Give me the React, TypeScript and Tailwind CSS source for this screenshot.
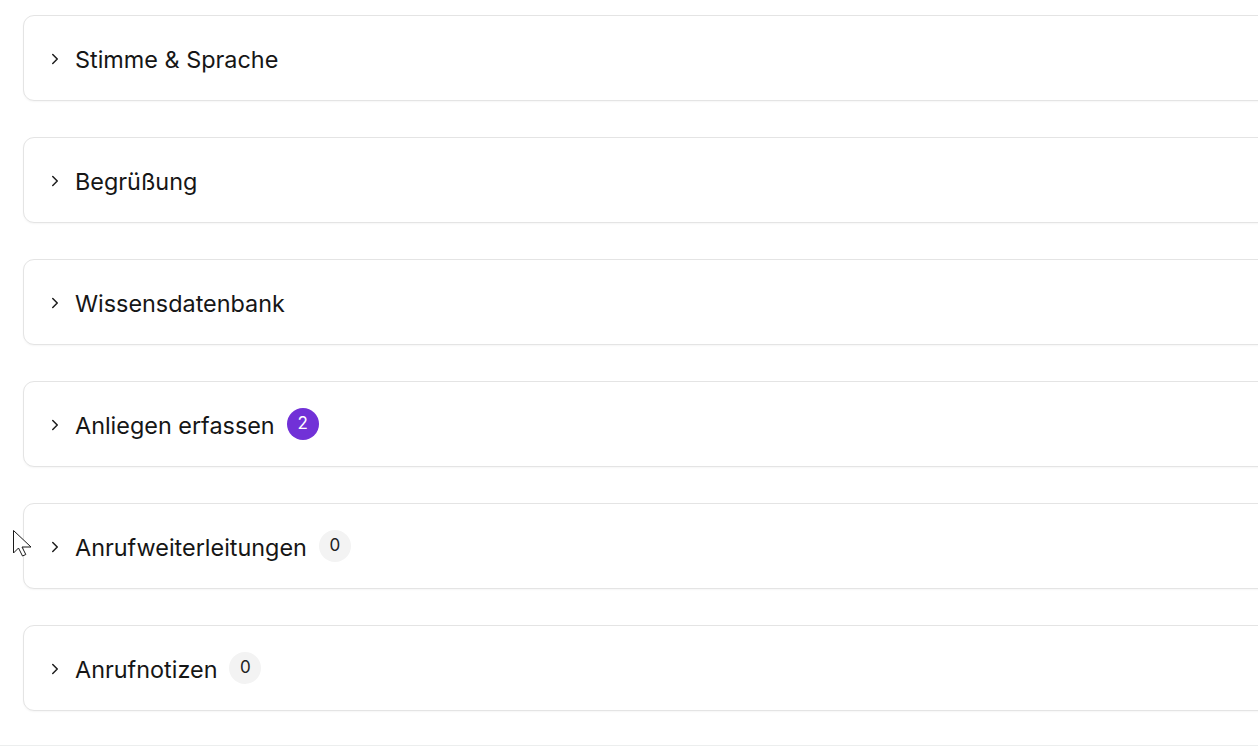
import { ChevronRight } from "lucide-react";

type Section = {
  title: string;
  count?: number;
  highlight?: boolean;
};

const sections: Section[] = [
  { title: "Stimme & Sprache" },
  { title: "Begrüßung" },
  { title: "Wissensdatenbank" },
  { title: "Anliegen erfassen", count: 2, highlight: true },
  { title: "Anrufweiterleitungen", count: 0 },
  { title: "Anrufnotizen", count: 0 },
];

const SectionCard = ({ section }: { section: Section }) => {
  return (
    <div className="flex h-[86px] items-center gap-[11px] rounded-[11px] border border-[#e4e4e4] bg-white pl-[22px] pt-[3px] shadow-[0_1px_2px_rgba(0,0,0,0.04)]">
      <ChevronRight size={18} strokeWidth={2} className="-mt-[1px] text-[#1c1c1c]" />
      <div className="flex items-center gap-3">
        <span className="text-[23.4px] leading-none text-[#161616]">{section.title}</span>
        {/* Zähler */}
        {section.count !== undefined && (
          <span
            className={`-mt-[3px] flex h-[32px] w-[32px] items-center justify-center rounded-full text-[17px] ${
              section.highlight ? "bg-[#7131d7] text-white" : "bg-[#f3f3f3] text-[#222]"
            }`}
          >
            {section.count}
          </span>
        )}
      </div>
    </div>
  );
};

const App = () => {
  return (
    <div className="relative h-[746px] w-full overflow-hidden bg-white font-['Inter',sans-serif]">
      <div className="flex w-[1300px] flex-col gap-[36px] pl-[23px] pt-[15px]">
        {sections.map((section, index) => (
          <SectionCard section={section} key={index} />
        ))}
      </div>
      <div className="mt-[34px] border-t border-[#eceeee]" />

      {/* Mauszeiger */}
      <svg
        className="absolute left-[12px] top-[529px]"
        width="22"
        height="30"
        viewBox="0 0 22 30"
      >
        <path
          d="M1.5 1.5 L1.5 24 L6.5 19 L10.5 27 L13.8 25.5 L10 18 L19 18 Z"
          fill="white"
          stroke="#1a1a1a"
          strokeWidth="1"
        />
      </svg>
    </div>
  );
};

export default App;
